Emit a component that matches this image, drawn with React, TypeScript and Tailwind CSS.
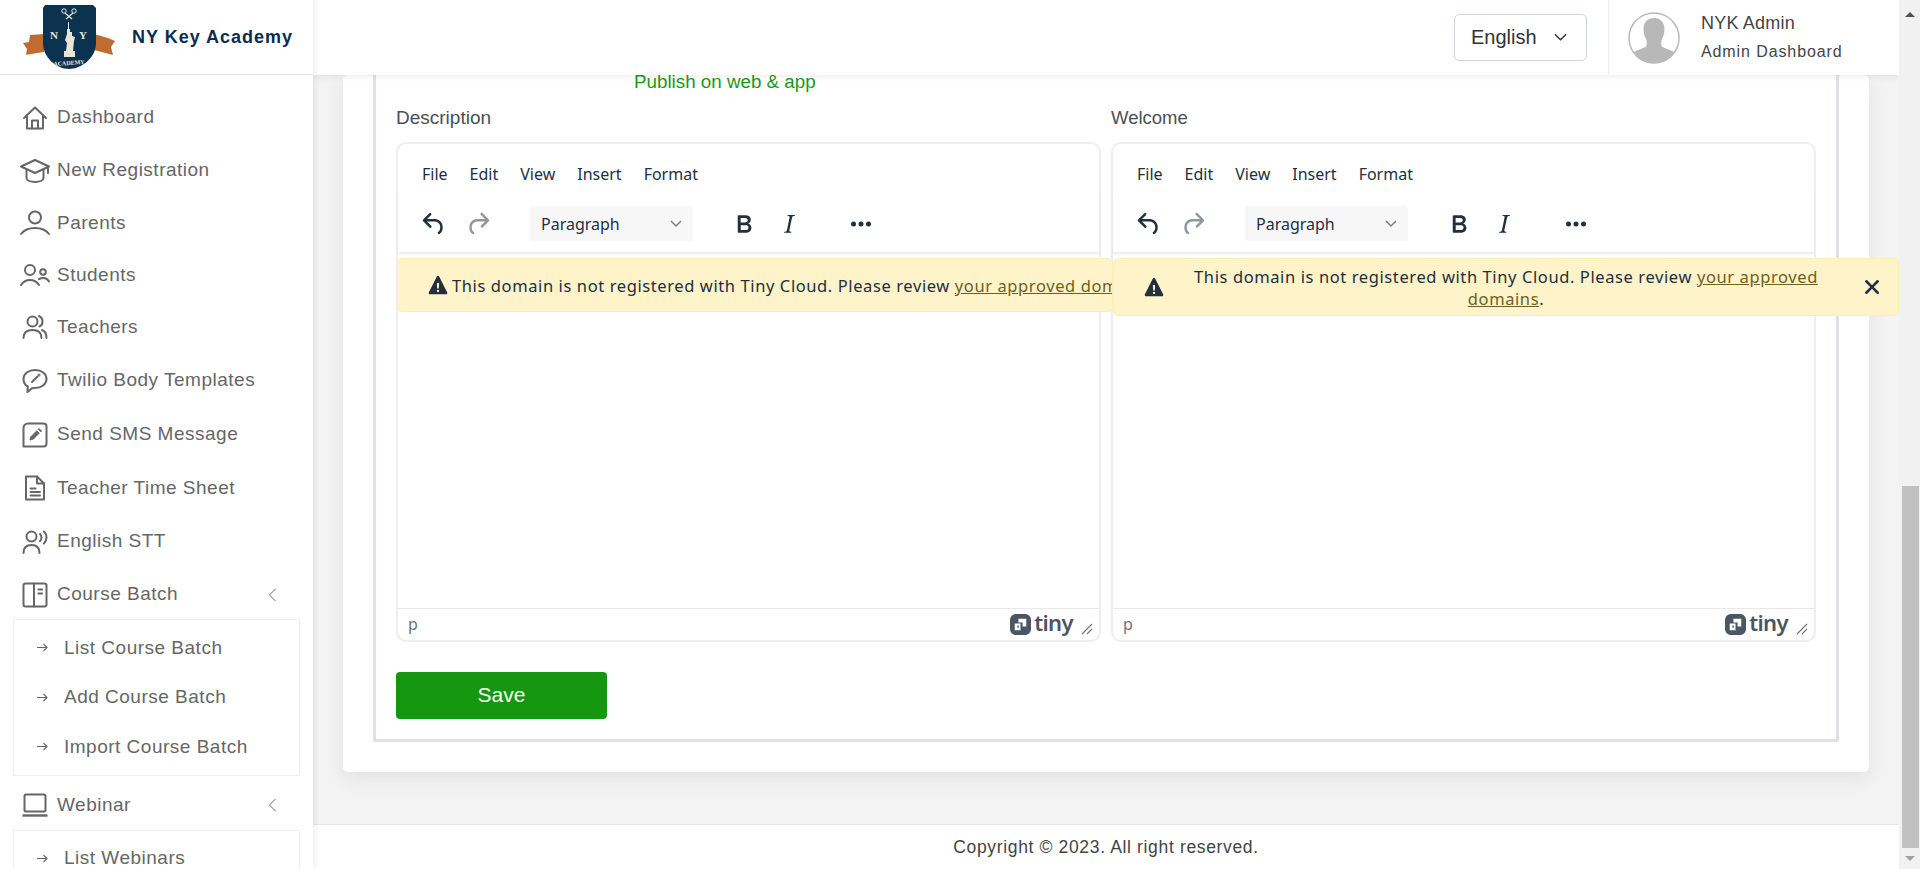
import React from 'react';

const arial = "font-['Liberation_Sans',Arial,sans-serif]";
const tinyFont = "font-['Noto_Sans',sans-serif]";

const ICON = 'w-[26px] h-[26px] shrink-0 fill-none stroke-[#666] stroke-[2]';
const WIDE_ICON = 'w-[30px] h-[26px] shrink-0 fill-none stroke-[#666] stroke-[2] -ml-[2px] -mr-[2px]';

function HomeIcon() {
  return (
    <svg viewBox="0 0 26 26" className={ICON} strokeLinejoin="round" strokeLinecap="round">
      <path d="M2 13 13 2.500 24 13" />
      <path d="M5 10.500V23.500H21V10.500" />
      <path d="M10 23.500V15.500H16V23.500" />
    </svg>
  );
}
function CapIcon() {
  return (
    <svg viewBox="0 0 30 26" className={WIDE_ICON} strokeLinejoin="round" strokeLinecap="round">
      <path d="M1 8.500 15 2l14 6.500-14 6.500L1 8.500Z" />
      <path d="M6.500 12v8c0 2.500 4 4 8.500 4s8.500-1.500 8.500-4v-8" />
      <path d="M28 9v6" />
    </svg>
  );
}
function PersonIcon() {
  return (
    <svg viewBox="0 0 30 26" className={WIDE_ICON} strokeLinecap="round">
      <circle cx="15" cy="7.500" r="6" />
      <path d="M1 24c3-4 8.500-6 14-6s11 2 14 6" />
    </svg>
  );
}
function StudentsIcon() {
  return (
    <svg viewBox="0 0 30 26" className={WIDE_ICON} strokeLinecap="round">
      <circle cx="10" cy="8" r="5" />
      <circle cx="23" cy="10" r="2.800" />
      <path d="M1 23c2-3 5-5 9-5s7 2 9 5" />
      <path d="M19 17c1-.5 3-1 4.500-1 2 0 4 1 5.500 3.500" />
    </svg>
  );
}
function TeachersIcon() {
  return (
    <svg viewBox="0 0 26 26" className={ICON} strokeLinecap="round">
      <circle cx="10.500" cy="7.500" r="5" />
      <path d="M1.500 24c0-5 3-8 9-8s9 3 9 8" />
      <path d="M17 2c2 1 3.500 3 3.500 5.500S19 12 17.500 12.500" />
      <path d="M20 16c3 1 4.500 4 4.500 8" />
    </svg>
  );
}
function ChatIcon() {
  return (
    <svg viewBox="0 0 26 26" className={ICON} strokeLinejoin="round" strokeLinecap="round">
      <path d="M13 2c6.500 0 11.500 3.500 11.500 9S19.500 20 13 20c-1 0-2 0-3 .2L5.500 24l.3-5.500C3 17 1.500 14.500 1.500 11 1.500 5.500 6.500 2 13 2Z" />
      <path d="M10 14l5.500-5.500" />
      <circle cx="17" cy="7" r="0.500" />
    </svg>
  );
}
function SmsIcon() {
  return (
    <svg viewBox="0 0 26 26" className={ICON} strokeLinejoin="round">
      <path d="M6 1.500h15.500c1.700 0 3 1.300 3 3v17c0 1.700-1.300 3-3 3H1.500V6C1.500 3.500 3.500 1.500 6 1.500Z" />
      <path d="M8 18l.8-3.200 6-6 2.400 2.400-6 6L8 18Z" fill="#666" strokeWidth="1" />
      <path d="M16 7.500l1-1 2.500 2.500-1 1" fill="#666" strokeWidth="1" />
    </svg>
  );
}
function SheetIcon() {
  return (
    <svg viewBox="0 0 26 26" className={ICON} strokeLinejoin="round" strokeLinecap="round">
      <path d="M4 1.500h11l7 7V24.500H4V1.500Z" />
      <path d="M15 1.500v7h7" />
      <path d="M8.500 13.500h5M8.500 17h9.500M8.500 20.500h9.500" />
    </svg>
  );
}
function VoiceIcon() {
  return (
    <svg viewBox="0 0 26 26" className={ICON} strokeLinecap="round">
      <circle cx="9.500" cy="7.500" r="5" />
      <path d="M1.500 24c0-5 3-8 8-8s8 3 8 8" />
      <path d="M18 5c1 1 1.500 2 1.500 3.500S19 11 18 12" />
      <path d="M22 2.500c1.500 1.500 2.500 3.500 2.500 6s-1 4.500-2.500 6" />
    </svg>
  );
}
function BookIcon() {
  return (
    <svg viewBox="0 0 26 26" className={ICON} strokeLinejoin="round" strokeLinecap="round">
      <rect x="1.500" y="1.500" width="23" height="23" rx="2" />
      <path d="M12 1.500v23" />
      <path d="M16.500 7.500h3.500M16.500 11.500h3.500" strokeWidth="2.200" />
    </svg>
  );
}
function LaptopIcon() {
  return (
    <svg viewBox="0 0 26 26" className={ICON} strokeLinejoin="round">
      <rect x="2.500" y="2.500" width="21" height="17" rx="1.500" />
      <path d="M0.500 23.500h25" strokeWidth="2.400" />
    </svg>
  );
}
function ChevronLeft() {
  return (
    <svg viewBox="0 0 10 16" className="w-[9px] h-[14px] fill-none stroke-[#666] stroke-[1.100]">
      <path d="M8.500 1 1.500 8l7 7" />
    </svg>
  );
}

function Logo() {
  return (
    <svg viewBox="0 0 92 64" className="w-[92px] h-[64px] shrink-0">
      <path d="M0 38 6 37 7 30 21 29V47L8 49 3 50 4 44Z" fill="#bf6c32" />
      <path d="M71 29 85 33 92 36 88 42 90 50 71 45Z" fill="#bf6c32" />
      <path d="M22 0H70L73 3V38C73 53 58 64 46 64S20 53 20 38V3Z" fill="#0b3350" />
      <g fill="#e9e5d6">
        <path d="M44 24h3v3h2v4l3 1-1 4-1 10h2v6H41v-6h2l1-8-2-3 2-6Z" />
        <path d="M45 17h1v8h-1Z" />
        <circle cx="41" cy="6" r="2.200" fill="none" stroke="#e9e5d6" />
        <circle cx="51" cy="6" r="2.200" fill="none" stroke="#e9e5d6" />
        <path d="M42 8l7 6M50 8l-7 6" stroke="#e9e5d6" strokeWidth="1.200" />
        <text x="27" y="34" fontSize="11" fontWeight="700" fontFamily="'Liberation Serif',serif">N</text>
        <text x="56" y="34" fontSize="11" fontWeight="700" fontFamily="'Liberation Serif',serif">Y</text>
        <text x="46" y="60" fontSize="6" fontWeight="700" textAnchor="middle" fontFamily="'Liberation Serif',serif" transform="rotate(-4 46 59)">ACADEMY</text>
      </g>
    </svg>
  );
}

const menu = [
  { label: 'Dashboard', Icon: HomeIcon, h: 'h-[53px]' },
  { label: 'New Registration', Icon: CapIcon, h: 'h-[53px]' },
  { label: 'Parents', Icon: PersonIcon, h: 'h-[52px]' },
  { label: 'Students', Icon: StudentsIcon, h: 'h-[52px]' },
  { label: 'Teachers', Icon: TeachersIcon, h: 'h-[52px]' },
  { label: 'Twilio Body Templates', Icon: ChatIcon, h: 'h-[55px]' },
  { label: 'Send SMS Message', Icon: SmsIcon, h: 'h-[53px]' },
  { label: 'Teacher Time Sheet', Icon: SheetIcon, h: 'h-[54px]' },
  { label: 'English STT', Icon: VoiceIcon, h: 'h-[53px]' },
];

function Sidebar() {
  return (
    <aside className="w-[313px] shrink-0 h-full bg-white overflow-hidden shadow-[2px_0_6px_rgba(0,0,0,0.08)] z-30">
      <div className="h-[75px] border-b border-[#e6e6e6] flex items-center pl-[23px]">
        <Logo />
        <span className={`${arial} ml-[17px] text-[18px] font-bold tracking-[1px] text-[#0b2d4e]`}>NY Key Academy</span>
      </div>
      <nav className={`${arial} text-[19px] tracking-[0.5px] text-[#666] pt-[16px]`}>
        {menu.map(({ label, Icon, h }) => (
          <div key={label} className={`${h} flex items-center pl-[22px] gap-[9px]`}>
            <Icon />
            <span>{label}</span>
          </div>
        ))}
        <SubMenu label="Course Batch" Icon={BookIcon} items={['List Course Batch', 'Add Course Batch', 'Import Course Batch']} />
        <SubMenu label="Webinar" Icon={LaptopIcon} items={['List Webinars']} />
      </nav>
    </aside>
  );
}

function SubMenu({ label, Icon, items }: { label: string; Icon: () => React.ReactElement; items: string[] }) {
  return (
    <div>
      <div className="h-[53px] flex items-center pl-[22px] gap-[9px] pr-[36px]">
        <Icon />
        <span className="flex-1">{label}</span>
        <ChevronLeft />
      </div>
      <div className="mx-[13px] -mt-[2px] mb-[3px] border border-[#eceeef] py-[3px]">
        {items.map((item) => (
          <div key={item} className="h-[49.500px] flex items-center pl-[22px]">
            <svg viewBox="0 0 12 10" className="w-[12px] h-[11px] fill-none stroke-[#666] stroke-[1.100]">
              <path d="M1 5h10M7.500 1.500 11 5 7.500 8.500" />
            </svg>
            <span className="ml-[16px]">{item}</span>
          </div>
        ))}
      </div>
    </div>
  );
}

function Header() {
  return (
    <header className="relative z-20 h-[75px] shrink-0 bg-white shadow-[0_2px_6px_rgba(0,0,0,0.07)] flex items-center justify-end">
      <div className={`${arial} w-[133px] h-[47px] mr-[21px] border border-[#ced4da] rounded-[5px] flex items-center pl-[16px] pr-[19px] pb-[2px] justify-between text-[20px] text-[#333]`}>
        <span>English</span>
        <svg viewBox="0 0 14 8" className="w-[13px] h-[8px] fill-none stroke-[#333] stroke-[1.500]">
          <path d="M1 1l6 6 6-6" />
        </svg>
      </div>
      <div className="w-[291px] h-full border-l border-[#eeeeee] flex items-center pl-[19px]">
        <svg viewBox="0 0 52 52" className="w-[52px] h-[52px] shrink-0">
          <defs>
            <clipPath id="avatar-clip"><circle cx="26" cy="26" r="25" /></clipPath>
          </defs>
          <circle cx="26" cy="26" r="25" fill="#fff" stroke="#b8b8b8" strokeWidth="1.500" />
          <g clipPath="url(#avatar-clip)" fill="#b8b8b8">
            <path d="M26 6c6.500 0 10.500 4.500 10.500 11 0 4-1 7-2.500 10-1 2-1 6 0 7.500 2 2 12 4 15 8V52H3v-9.500c3-4 13-6 15-8 1-1.500 1-5.500 0-7.500-1.500-3-2.500-6-2.500-10C15.500 10.500 19.500 6 26 6Z" />
          </g>
        </svg>
        <div className={`${arial} ml-[21px] text-[#444] -mt-[2px]`}>
          <div className="text-[18px] leading-[22px] tracking-[0.2px]">NYK Admin</div>
          <div className="text-[16px] leading-[20px] mt-[8px] tracking-[0.9px]">Admin Dashboard</div>
        </div>
      </div>
    </header>
  );
}

function TinyMark() {
  return (
    <svg viewBox="0 0 20 20" className="w-[21px] h-[21px]">
      <path d="M6 0h8c3.500 0 6 2.500 6 6v8c0 3.500-2.500 6-6 6H6c-3.500 0-6-2.500-6-6V6c0-3.500 2.500-6 6-6Z" fill="#4b5563" />
      <path d="M8 4.500h7.500V12h-3.500V8H8Z M4.500 9h5.500v6.500H4.500Z" fill="#fff" />
      <path d="M7 11h1.300v2H7Z" fill="#4b5563" />
    </svg>
  );
}

function Editor({ children }: { children?: React.ReactNode }) {
  return (
    <div className={`${tinyFont} relative h-[500px] border-2 border-[#eeeeee] rounded-[10px] flex flex-col text-[#222f3e]`}>
      <div className="h-[48px] flex items-end pl-[24px] gap-[22px] text-[16px] leading-[30px] pb-[3px]">
        <span>File</span>
        <span>Edit</span>
        <span>View</span>
        <span>Insert</span>
        <span>Format</span>
      </div>
      <div className="h-[61px] flex items-center pl-[21px] pt-[3px] border-b border-[#eeeeee] shadow-[0_2px_2px_rgba(0,0,0,0.05)]">
        <svg viewBox="0 0 24 24" className="w-[30px] h-[30px] fill-[#222f3e]">
          <path d="M6.400 8H12c3.700 0 6.200 2 6.800 5.100.6 2.700-.4 5.600-2.300 6.800a1 1 0 0 1-1-1.800c1.100-.6 1.800-2.700 1.400-4.600-.5-2.100-2.100-3.500-4.900-3.500H6.400l3.300 3.300a1 1 0 1 1-1.400 1.400l-5-5a1 1 0 0 1 0-1.400l5-5a1 1 0 0 1 1.400 1.400L6.400 8Z" />
        </svg>
        <svg viewBox="0 0 24 24" className="w-[30px] h-[30px] fill-[#222f3e]/50 ml-[14px]">
          <path d="M17.600 10H12c-2.800 0-4.400 1.400-4.900 3.500-.4 2 .3 4 1.400 4.600a1 1 0 1 1-1 1.800c-2-1.200-2.900-4.100-2.300-6.800.6-3 3-5.100 6.800-5.100h5.600l-3.300-3.300a1 1 0 1 1 1.400-1.400l5 5a1 1 0 0 1 0 1.400l-5 5a1 1 0 0 1-1.400-1.400l3.300-3.300Z" />
        </svg>
        <div className="ml-[37px] w-[163px] h-[35px] rounded-[3px] bg-[#f7f7f7] flex items-center justify-between pl-[11px] pr-[11px] text-[16px]">
          <span>Paragraph</span>
          <svg viewBox="0 0 12 8" className="w-[12px] h-[8px] fill-none stroke-[#222f3e]/60 stroke-[1.500]">
            <path d="M1 1l5 5 5-5" />
          </svg>
        </div>
        <svg viewBox="0 0 24 24" className="w-[30px] h-[30px] fill-[#222f3e] ml-[36px]">
          <path d="M7.800 19c-.3 0-.5 0-.6-.2l-.2-.5V5.700c0-.2 0-.4.200-.5l.6-.2h5c1.500 0 2.700.3 3.500 1 .7.600 1.100 1.400 1.100 2.500a3 3 0 0 1-.6 1.900c-.4.600-1 1-1.600 1.200.4.100.9.300 1.300.6s.8.700 1 1.200c.3.400.4 1 .4 1.600 0 1.300-.4 2.300-1.300 3-.8.700-2.100 1-3.800 1H7.800Zm5-8.300c.6 0 1.200-.1 1.600-.5.400-.3.600-.7.600-1.300 0-1.100-.8-1.700-2.300-1.700H9.300v3.500h3.400Zm.5 6c.7 0 1.300-.1 1.700-.4.400-.4.600-.9.600-1.500s-.2-1-.7-1.400c-.4-.3-1-.4-2-.4H9.400v3.800h4Z" />
        </svg>
        <svg viewBox="0 0 24 24" className="w-[30px] h-[30px] fill-[#222f3e] ml-[15px]">
          <path d="m16.700 4.700-.1.900h-.3c-.6 0-1 0-1.400.3-.3.300-.4.600-.5 1.100l-2.100 9.800v.6c0 .5.400.8 1.400.8h.2l-.2.800H8l.2-.8h.2c1.100 0 1.800-.5 2-1.500l2-9.800.1-.5c0-.6-.4-.8-1.400-.8h-.3l.2-.9h5.800Z" />
        </svg>
        <svg viewBox="0 0 24 24" className="w-[30px] h-[30px] fill-[#222f3e] ml-[42px]">
          <circle cx="6" cy="12" r="2" /><circle cx="12" cy="12" r="2" /><circle cx="18" cy="12" r="2" />
        </svg>
      </div>
      <div className="flex-1" />
      <div className="h-[32px] shrink-0 border-t border-[#e8e8e8] flex items-center pl-[10px] pr-[6px]">
        <span className="text-[16px] text-[#6b7280] flex-1 -mt-[2px]">p</span>
        <TinyMark />
        <span className="ml-[3px] text-[22px] font-semibold text-[#4b5563] leading-none -mt-[5px] tracking-[-0.6px]">tiny</span>
        <svg viewBox="0 0 12 12" className="w-[12px] h-[12px] ml-[8px] mt-[8px] fill-none stroke-[#6b7280] stroke-[1.100]">
          <path d="M1 11 11 1M6 11l5-5" />
        </svg>
      </div>
      {children}
    </div>
  );
}

const WarnIcon = () => (
  <svg viewBox="0 0 24 24" className="w-[28px] h-[28px] shrink-0 fill-[#222f3e]">
    <path d="M19.800 18.300c.2.500.3.900 0 1.200-.1.300-.5.500-1 .5H5.200c-.5 0-.9-.2-1-.5-.3-.3-.2-.7 0-1.200L11 4.700l.5-.5.500-.2c.2 0 .3 0 .5.2.2 0 .3.300.5.500l6.800 13.600zM12 18c.3 0 .5-.1.7-.3.2-.2.3-.4.3-.7a1 1 0 0 0-.3-.7 1 1 0 0 0-.7-.3 1 1 0 0 0-.7.300 1 1 0 0 0-.3.700c0 .3.1.5.300.7.2.2.4.3.7.3zm.7-3 .3-4a1 1 0 0 0-.3-.7 1 1 0 0 0-.7-.3 1 1 0 0 0-.7.300 1 1 0 0 0-.3.700l.3 4h1.400z" />
  </svg>
);

function Content() {
  return (
    <main className="flex-1 min-h-0 bg-[#f3f3f3] overflow-hidden flex flex-col justify-end px-[30px] pb-[52px]">
      <div className="bg-white rounded-[5px] shadow-[0_6px_20px_rgba(0,0,0,0.08)] p-[30px] pt-0">
        <div className="border-[3px] border-t-0 border-[#dee2e6] rounded-b-[3px] px-[20px] pb-[20px]">
          <div className={`${arial} text-[18.800px] leading-[14px] text-[#1a9a14] pl-[238px] mb-[18px]`}>Publish on web &amp; app</div>
          <div className="grid grid-cols-2 gap-[10px]">
            <div>
              <div className={`${arial} text-[19px] leading-[22px] text-[#495057] mb-[13px]`}>Description</div>
              <Editor>
                <div className="absolute z-10 -left-px top-[114px] right-[-14px] h-[54px] bg-[#fef3c9] border border-[#fdeeb8] rounded-[5px] flex items-center pl-[26px] overflow-hidden whitespace-nowrap text-[16.500px] tracking-[0.6px]">
                  <WarnIcon />
                  <span className="pt-[2px]">This domain is not registered with Tiny Cloud. Please review <span className="underline text-[#6f5f1d]">your approved domains</span>.</span>
                </div>
              </Editor>
            </div>
            <div>
              <div className={`${arial} text-[18.500px] leading-[22px] text-[#495057] mb-[13px]`}>Welcome</div>
              <Editor>
                <div className="absolute z-10 left-0 top-[114px] right-[-85px] h-[58px] bg-[#fef3c9] border border-[#fdeeb8] rounded-[5px] flex items-center pl-[26px] pr-[11px] text-[16.500px] tracking-[0.6px] leading-[22px]">
                  <WarnIcon />
                  <div className="w-[650px] ml-[13px] pt-[2px] text-center">This domain is not registered with Tiny Cloud. Please review <span className="underline text-[#6f5f1d]">your approved domains</span>.</div>
                  <svg viewBox="0 0 24 24" className="w-[30px] h-[30px] shrink-0 fill-[#222f3e] ml-auto">
                    <path d="M17.300 8.200 13.400 12l3.900 3.800a1 1 0 0 1-1.500 1.500L12 13.400l-3.800 3.900a1 1 0 0 1-1.500-1.500l3.900-3.800-3.900-3.800a1 1 0 0 1 1.500-1.500l3.800 3.900 3.800-3.900a1 1 0 0 1 1.500 1.500Z" />
                  </svg>
                </div>
              </Editor>
            </div>
          </div>
          <button className={`${arial} mt-[30px] w-[211px] h-[47px] pb-[2px] rounded-[4px] bg-[#15960f] text-white text-[21px] block`}>Save</button>
        </div>
      </div>
    </main>
  );
}

function Scrollbar() {
  return (
    <div className="w-[21px] shrink-0 h-full bg-[#f1f1f1] flex flex-col items-center relative z-30">
      <div className="h-[17px] flex items-end">
        <div className="w-0 h-0 border-l-[5px] border-r-[5px] border-b-[5px] border-l-transparent border-r-transparent border-b-[#505050]" />
      </div>
      <div className="flex-1" />
      <div className="w-[17px] h-[362px] bg-[#c1c1c1] ml-[1px]" />
      <div className="h-[21px] flex items-center">
        <div className="w-0 h-0 border-l-[5px] border-r-[5px] border-t-[5px] border-l-transparent border-r-transparent border-t-[#a3a3a3]" />
      </div>
    </div>
  );
}

export default function App() {
  return (
    <div className="h-screen w-full flex overflow-hidden bg-[#f3f3f3]">
      <Sidebar />
      <div className="flex-1 min-w-0 h-full flex flex-col">
        <Header />
        <Content />
        <footer className={`${arial} h-[45px] shrink-0 bg-white border-t border-[#e6e6e6] flex items-center justify-center text-[17.500px] tracking-[0.65px] text-[#444]`}>
          Copyright © 2023. All right reserved.
        </footer>
      </div>
      <Scrollbar />
    </div>
  );
}
